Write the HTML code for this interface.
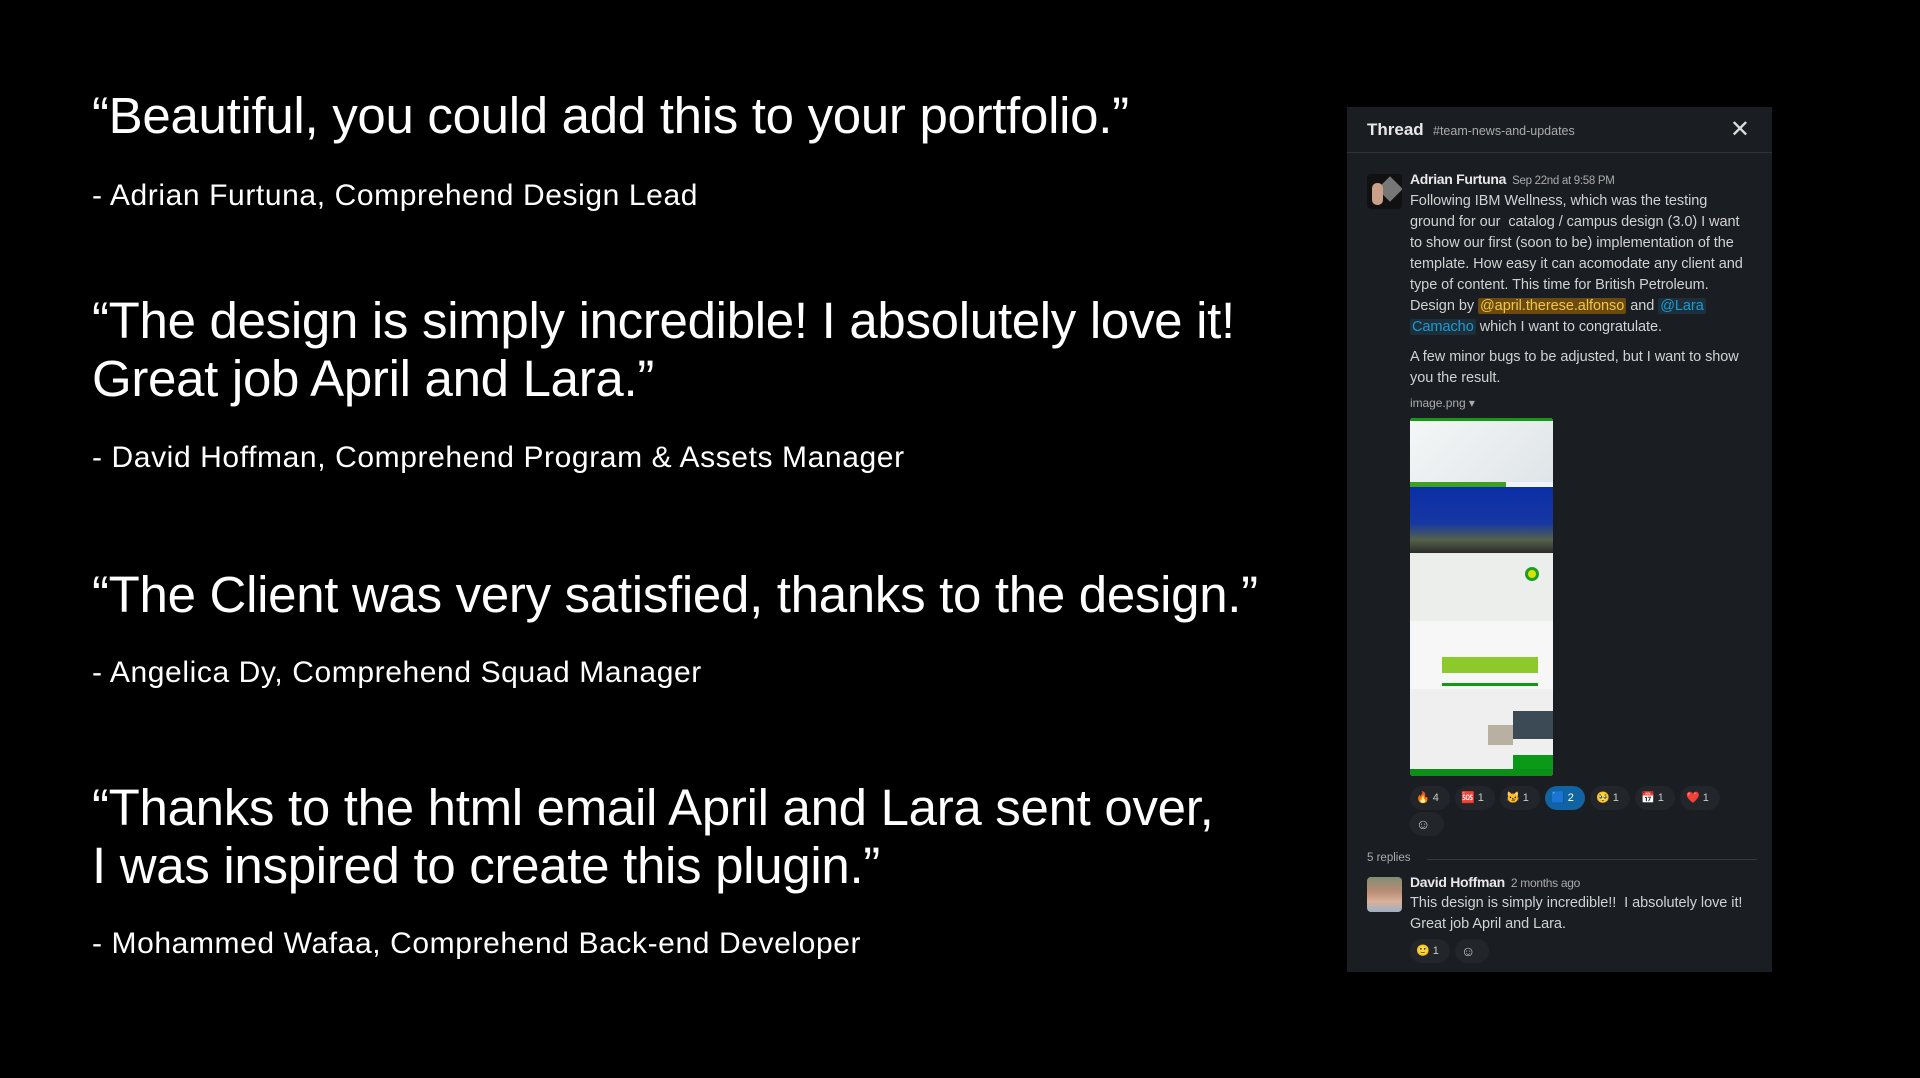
<!DOCTYPE html>
<html><head><meta charset="utf-8"><style>
*{margin:0;padding:0;box-sizing:border-box}
body{width:1920px;height:1078px;background:#000;position:relative;overflow:hidden;font-family:"Liberation Sans",sans-serif;color:#fff}
.q{position:absolute;left:92px;font-size:51px;line-height:58px;white-space:nowrap;letter-spacing:-0.3px}
.a{position:absolute;left:92px;font-size:30px;line-height:34px;white-space:nowrap;letter-spacing:0.6px}
.panel{position:absolute;left:1347px;top:107px;width:425px;height:865px;background:#1a1d21;font-family:"Liberation Sans",sans-serif;color:#d1d2d3}
.hdr{height:46px;border-bottom:1px solid #2f3236;position:relative}
.hdr b{position:absolute;left:20px;top:13px;font-size:17px;color:#e8e8e8}
.hdr span{position:absolute;left:86px;top:17px;font-size:12.5px;color:#ababad}
.hdr i{position:absolute;right:22px;top:8px;font-style:normal;font-size:24px;color:#ddd}
.av{position:absolute;width:35px;height:35px;border-radius:4px;overflow:hidden}
.t{position:absolute;left:63px;font-size:14.5px;line-height:21px;white-space:nowrap;letter-spacing:-0.05px}
.nm{font-weight:bold;color:#e8e8e8;font-size:14px;letter-spacing:-0.3px}
.tm{color:#ababad;font-size:11.5px;margin-left:6px;letter-spacing:-0.3px}
.ye{background:#6b4a0f;color:#f2c744;padding:0 2px;border-radius:2px}
.bl{background:#1d2f3b;color:#1d9bd1;padding:0 2px;border-radius:2px}
.r{position:absolute;height:24px;width:40px;border-radius:12px;background:#222529;font-size:11px;color:#ccc;line-height:24px;padding-left:6px}
</style></head><body>
<div class="q" style="top:87px">“Beautiful, you could add this to your portfolio.”</div>
<div class="a" style="top:179px">- Adrian Furtuna, Comprehend Design Lead</div>
<div class="q" style="top:292px">“The design is simply incredible! I absolutely love it!<br>Great job April and Lara.”</div>
<div class="a" style="top:441px">- David Hoffman, Comprehend Program &amp; Assets Manager</div>
<div class="q" style="top:566px">“The Client was very satisfied, thanks to the design.”</div>
<div class="a" style="top:656px">- Angelica Dy, Comprehend Squad Manager</div>
<div class="q" style="top:779px">“Thanks to the html email April and Lara sent over,<br>I was inspired to create this plugin.”</div>
<div class="a" style="top:927px">- Mohammed Wafaa, Comprehend Back-end Developer</div>

<div class="panel">
 <div class="hdr"><b>Thread</b><span>#team-news-and-updates</span><i>✕</i></div>
 <div class="av" style="left:20px;top:67px;background:#111"><div style="position:absolute;left:14px;top:6px;width:18px;height:18px;background:#777;transform:rotate(45deg)"></div><div style="position:absolute;left:5px;top:9px;width:11px;height:22px;background:#caa088;border-radius:5px"></div></div>
 <div class="t" style="top:62px"><span class="nm">Adrian Furtuna</span><span class="tm">Sep 22nd at 9:58 PM</span></div>
 <div class="t" style="top:84px">Following IBM Wellness, which was the testing<br>ground for our&nbsp; catalog / campus design (3.0) I want<br>to show our first (soon to be) implementation of the<br>template. How easy it can acomodate any client and<br>type of content. This time for British Petroleum.<br>Design by <span class="ye">@april.therese.alfonso</span> and <span class="bl">@Lara</span><br><span class="bl">Camacho</span> which I want to congratulate.</div>
 <div class="t" style="top:240px">A few minor bugs to be adjusted, but I want to show<br>you the result.</div>
 <div class="t" style="top:286px;font-size:12px;color:#ababad">image.png ▾</div>
 <div style="position:absolute;left:63px;top:311px;width:143px;height:358px;border-radius:3px;overflow:hidden;background:#f2f3f2">
  <div style="height:3px;background:#129a13"></div>
  <div style="height:61px;background:linear-gradient(135deg,#f4f6f7,#dfe5e8)"></div>
  <div style="height:5px;background:#3da01e;width:96px"></div>
  <div style="height:66px;background:linear-gradient(180deg,#0a2ea6,#1637a4 55%,#55624a 80%,#2b2b2b)"></div>
  <div style="height:68px;background:#eceeec;position:relative"><div style="position:absolute;right:14px;top:14px;width:14px;height:14px;border-radius:50%;background:#d4e600;border:3px solid #1f9e25"></div></div>
  <div style="height:68px;background:#f6f7f6;position:relative"><div style="position:absolute;left:32px;top:36px;width:96px;height:16px;background:#8cc92a"></div><div style="position:absolute;left:32px;top:62px;width:96px;height:3px;background:#129a13"></div></div>
  <div style="height:80px;background:#efefef;position:relative"><div style="position:absolute;right:0;top:22px;width:40px;height:28px;background:#3b4a55"></div><div style="position:absolute;left:78px;top:36px;width:25px;height:20px;background:#b8b0a0"></div><div style="position:absolute;right:0;bottom:0;width:40px;height:14px;background:#0b9a17"></div></div>
  <div style="height:7px;background:#0b8f17"></div>
 </div>
 <div class="r" style="left:63px;top:679px">🔥 4</div>
 <div class="r" style="left:108px;top:679px">🆘 1</div>
 <div class="r" style="left:153px;top:679px">😼 1</div>
 <div class="r" style="left:198px;top:679px;background:#1164a3;color:#fff">🟦 2</div>
 <div class="r" style="left:243px;top:679px">🥺 1</div>
 <div class="r" style="left:288px;top:679px">📅 1</div>
 <div class="r" style="left:333px;top:679px">❤️ 1</div>
 <div class="r" style="left:63px;top:705px;width:34px;font-size:14px">☺</div>
 <div style="position:absolute;left:20px;top:745px;font-size:11.5px;color:#ababad">5 replies</div>
 <div style="position:absolute;left:80px;top:752px;width:330px;height:1px;background:#35383c"></div>
 <div class="av" style="left:20px;top:770px;background:linear-gradient(#7f8f74,#b88c74 40%,#dbb09a 70%,#9ab0c8)"></div>
 <div class="t" style="top:765px"><span class="nm">David Hoffman</span><span class="tm" style="font-size:12px">2 months ago</span></div>
 <div class="t" style="top:786px">This design is simply incredible!!&nbsp; I absolutely love it!<br>Great job April and Lara.</div>
 <div class="r" style="left:63px;top:832px">🙂 1</div>
 <div class="r" style="left:108px;top:832px;width:34px;font-size:14px">☺</div>
</div>
</body></html>
